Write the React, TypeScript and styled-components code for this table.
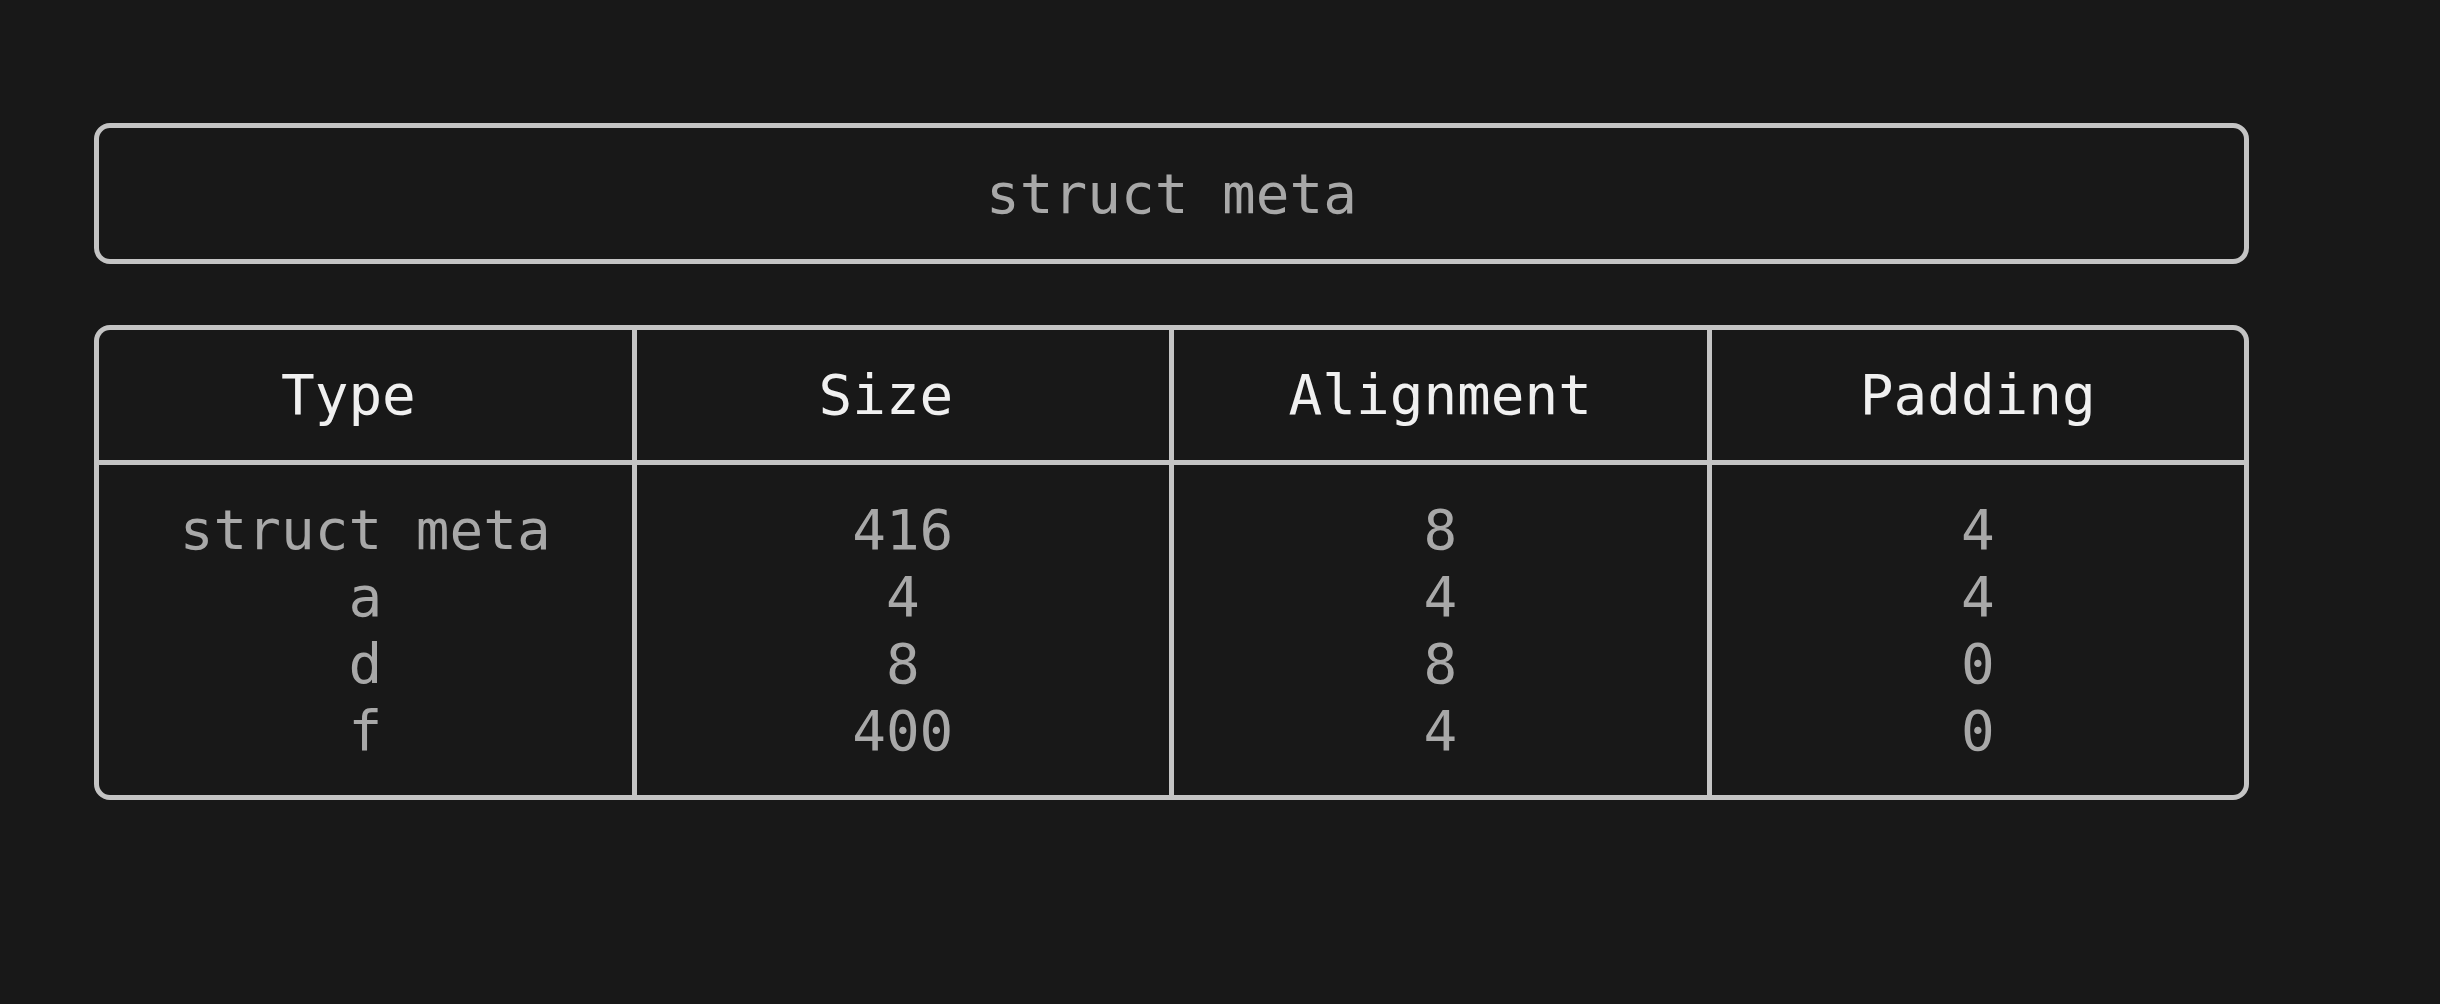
import React from "react";
import styled, { createGlobalStyle } from "styled-components";

const Global = createGlobalStyle`
  html, body {
    margin: 0;
    padding: 0;
    background: #181818;
  }
  body {
    font-family: "DejaVu Sans Mono", "Liberation Mono", monospace;
  }
`;

const Page = styled.main`
  box-sizing: border-box;
  width: 2440px;
  min-height: 1004px;
  padding: 123px 191px 0 94px;
  display: flex;
  flex-direction: column;
  gap: 61px;
  background: #181818;
`;

const TitleBox = styled.div`
  box-sizing: border-box;
  border: 5px solid #c4c4c4;
  border-radius: 16px;
  padding: 32px 0;
  text-align: center;
  font-size: 56px;
  line-height: 67px;
  color: #a8a8a8;
  white-space: pre;
`;

const Table = styled.div`
  box-sizing: border-box;
  border: 5px solid #c4c4c4;
  border-radius: 16px;
  background: #c4c4c4;
  display: grid;
  grid-template-columns: repeat(4, 1fr);
  gap: 5px;
  overflow: hidden;
`;

const Cell = styled.div<{ $head: boolean }>`
  box-sizing: border-box;
  padding: ${(p) => (p.$head ? "31px 0 32px" : "31px 0")};
  background: #181818;
  display: flex;
  flex-direction: column;
  align-items: center;
  font-size: 56px;
  line-height: 67px;
  color: ${(p) => (p.$head ? "#f0f0f0" : "#a8a8a8")};
  white-space: pre;
`;

const Line = styled.span`
  display: block;
`;

const headers = ["Type ", "Size ", "Alignment", "Padding"];
const columns = [
  ["struct meta", "a", "d", "f"],
  ["416", "4", "8", "400"],
  ["8", "4", "8", "4"],
  ["4", "4", "0", "0"],
];

export default function App() {
  return (
    <>
      <Global />
      <Page>
        <TitleBox>struct meta</TitleBox>
        <Table>
          {headers.map((h, i) => (
            <Cell key={"h" + i} $head>
              {h}
            </Cell>
          ))}
          {columns.map((col, i) => (
            <Cell key={"c" + i} $head={false}>
              {col.map((v, j) => (
                <Line key={j}>{v}</Line>
              ))}
            </Cell>
          ))}
        </Table>
      </Page>
    </>
  );
}
